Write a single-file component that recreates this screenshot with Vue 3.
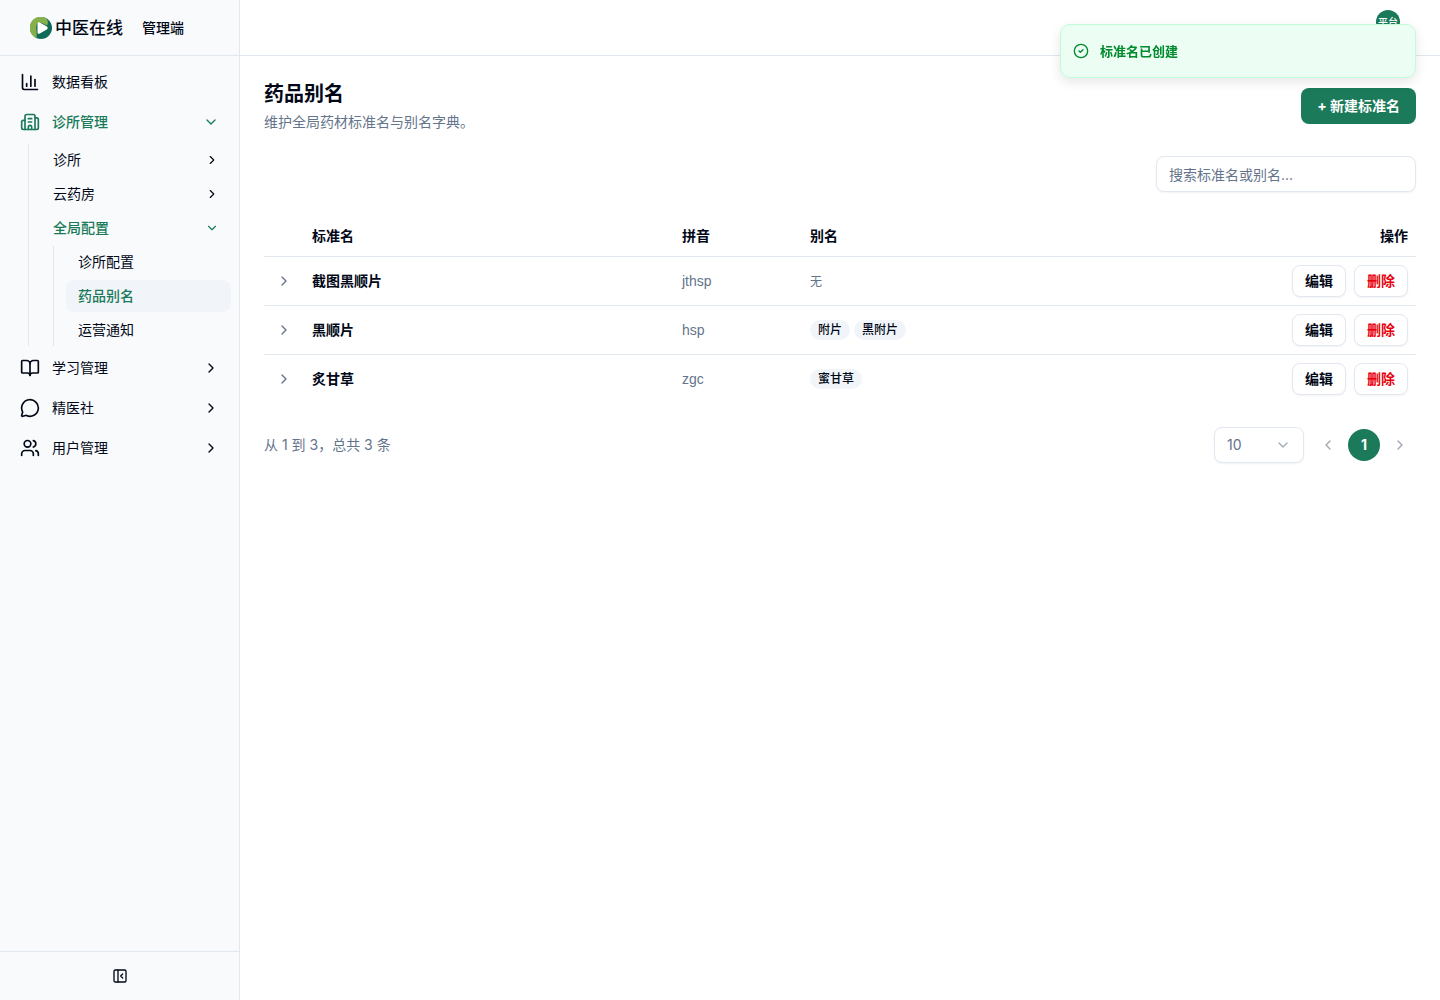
<template>
  <div class="layout">
    <aside class="sidebar">
      <div class="brand">
        <a href="#" class="logo">
          <svg width="22" height="22" viewBox="0 0 22 22" aria-hidden="true">
            <circle cx="11" cy="11" r="11" fill="#0f6b58" />
            <path d="M16 1.200A11 11 0 1 0 6.500 21C7.300 18 6 14 6.300 9.500 6.600 6 9 4.600 12 6L17 8.500C18.500 6 18 3 16 1.200Z" fill="#86b04a" />
            <path d="M7.500 6.800c0-1.500 1-2 2.300-1.300l7 4.100c1.300.8 1.300 2 0 2.800l-7 4.100c-1.300.7-2.300.2-2.300-1.300z" fill="#fff" />
          </svg>
          <span>中医在线</span>
        </a>
        <span class="role">管理端</span>
      </div>

      <nav class="nav">
        <template v-for="item in menu" :key="item.label">
          <button type="button" class="nav-item" :class="{ active: item.open }">
            <svg class="icon icon-lg" viewBox="0 0 24 24" aria-hidden="true">
              <path v-for="d in icons[item.icon]" :key="d" :d="d" />
            </svg>
            <span class="label">{{ item.label }}</span>
            <svg v-if="item.expandable" class="icon" viewBox="0 0 24 24" aria-hidden="true">
              <path :d="item.open ? down : right" />
            </svg>
          </button>
          <ul v-if="item.open" class="sub">
            <li v-for="child in item.children" :key="child.label">
              <button type="button" class="sub-item" :class="{ active: child.open }">
                <span class="label">{{ child.label }}</span>
                <svg class="icon icon-sm" viewBox="0 0 24 24" aria-hidden="true">
                  <path :d="child.open ? down : right" />
                </svg>
              </button>
              <ul v-if="child.open" class="sub nested">
                <li v-for="leaf in child.children" :key="leaf">
                  <a href="#" class="sub-item" :class="{ current: leaf === current }">{{ leaf }}</a>
                </li>
              </ul>
            </li>
          </ul>
        </template>
      </nav>

      <div class="sidebar-footer">
        <button type="button" class="collapse" aria-label="收起侧边栏">
          <svg class="icon" viewBox="0 0 24 24" aria-hidden="true">
            <rect x="3" y="3" width="18" height="18" rx="2" />
            <path d="M9 3v18" />
            <path d="m16 15-3-3 3-3" />
          </svg>
        </button>
      </div>
    </aside>

    <div class="page">
      <header class="topbar">
        <button type="button" class="avatar">平台</button>
      </header>

      <main class="content">
        <div class="heading">
          <div>
            <h1>药品别名</h1>
            <p>维护全局药材标准名与别名字典。</p>
          </div>
          <button type="button" class="btn-primary">+ 新建标准名</button>
        </div>

        <div class="toolbar">
          <input v-model="keyword" type="text" placeholder="搜索标准名或别名..." aria-label="搜索标准名或别名">
        </div>

        <table>
          <colgroup>
            <col class="col-expand">
            <col>
            <col class="col-pinyin">
            <col>
            <col class="col-actions">
          </colgroup>
          <thead>
            <tr>
              <th></th>
              <th>标准名</th>
              <th>拼音</th>
              <th>别名</th>
              <th class="right">操作</th>
            </tr>
          </thead>
          <tbody>
            <tr v-for="row in filtered" :key="row.name">
              <td>
                <button type="button" class="expand" aria-label="展开">
                  <svg class="icon" viewBox="0 0 24 24" aria-hidden="true"><path :d="right" /></svg>
                </button>
              </td>
              <td class="name">{{ row.name }}</td>
              <td class="pinyin">{{ row.pinyin }}</td>
              <td>
                <div v-if="row.aliases.length" class="tags">
                  <span v-for="alias in row.aliases" :key="alias" class="tag">{{ alias }}</span>
                </div>
                <span v-else class="none">无</span>
              </td>
              <td>
                <div class="actions">
                  <button type="button" class="btn">编辑</button>
                  <button type="button" class="btn danger">删除</button>
                </div>
              </td>
            </tr>
          </tbody>
        </table>

        <div class="pagination">
          <span>从 1 到 3，总共 3 条</span>
          <div class="pager">
            <div class="page-size">
              <select v-model="pageSize" aria-label="每页条数">
                <option value="10">10</option>
                <option value="20">20</option>
                <option value="50">50</option>
              </select>
              <svg class="icon" viewBox="0 0 24 24" aria-hidden="true"><path :d="down" /></svg>
            </div>
            <div class="pages">
              <button type="button" disabled aria-label="上一页">
                <svg class="icon" viewBox="0 0 24 24" aria-hidden="true"><path d="m15 18-6-6 6-6" /></svg>
              </button>
              <button type="button" class="selected">1</button>
              <button type="button" disabled aria-label="下一页">
                <svg class="icon" viewBox="0 0 24 24" aria-hidden="true"><path :d="right" /></svg>
              </button>
            </div>
          </div>
        </div>
      </main>
    </div>

    <div class="toast" role="status">
      <svg class="icon" viewBox="0 0 24 24" aria-hidden="true">
        <circle cx="12" cy="12" r="10" />
        <path d="m9 12 2 2 4-4" />
      </svg>
      <span>标准名已创建</span>
    </div>
  </div>
</template>

<script setup>
import { computed, ref } from 'vue';

const keyword = ref('');
const pageSize = ref('10');
const current = '药品别名';

const right = 'm9 18 6-6-6-6';
const down = 'm6 9 6 6 6-6';

const icons = {
  chart: ['M3 3v16a2 2 0 0 0 2 2h16', 'M18 17V9', 'M13 17V5', 'M8 17v-3'],
  hospital: [
    'M10 12h4',
    'M10 8h4',
    'M14 21v-3a2 2 0 0 0-4 0v3',
    'M6 10H4a2 2 0 0 0-2 2v7a2 2 0 0 0 2 2h16a2 2 0 0 0 2-2V9a2 2 0 0 0-2-2h-2',
    'M6 21V5a2 2 0 0 1 2-2h8a2 2 0 0 1 2 2v16',
  ],
  book: [
    'M12 7v14',
    'M3 18a1 1 0 0 1-1-1V4a1 1 0 0 1 1-1h5a4 4 0 0 1 4 4 4 4 0 0 1 4-4h5a1 1 0 0 1 1 1v13a1 1 0 0 1-1 1h-6a3 3 0 0 0-3 3 3 3 0 0 0-3-3z',
  ],
  message: ['M2.992 16.342a2 2 0 0 1 .094 1.167l-1.065 3.290a1 1 0 0 0 1.236 1.168l3.413-.998a2 2 0 0 1 1.099.092 10 10 0 1 0-4.777-4.719'],
  users: [
    'M16 21v-2a4 4 0 0 0-4-4H6a4 4 0 0 0-4 4v2',
    'M16 3.128a4 4 0 0 1 0 7.744',
    'M22 21v-2a4 4 0 0 0-3-3.870',
    'M9 3a4 4 0 1 0 0 8 4 4 0 0 0 0-8',
  ],
};

const menu = [
  { label: '数据看板', icon: 'chart' },
  {
    label: '诊所管理',
    icon: 'hospital',
    expandable: true,
    open: true,
    children: [
      { label: '诊所' },
      { label: '云药房' },
      { label: '全局配置', open: true, children: ['诊所配置', '药品别名', '运营通知'] },
    ],
  },
  { label: '学习管理', icon: 'book', expandable: true },
  { label: '精医社', icon: 'message', expandable: true },
  { label: '用户管理', icon: 'users', expandable: true },
];

const rows = [
  { name: '截图黑顺片', pinyin: 'jthsp', aliases: [] },
  { name: '黑顺片', pinyin: 'hsp', aliases: ['附片', '黑附片'] },
  { name: '炙甘草', pinyin: 'zgc', aliases: ['蜜甘草'] },
];

const filtered = computed(() =>
  rows.filter((row) => [row.name, ...row.aliases].some((text) => text.includes(keyword.value)))
);
</script>

<style>
body {
  margin: 0;
  background: #fff;
}
</style>

<style scoped>
* {
  box-sizing: border-box;
}

.layout {
  display: flex;
  min-height: 100vh;
  color: #020817;
  font-family: Inter, "Noto Sans CJK SC", sans-serif;
  font-size: 14px;
  line-height: 20px;
}

button,
input,
select {
  font: inherit;
  color: inherit;
  margin: 0;
}

button {
  padding: 0;
  border: 0;
  background: none;
  cursor: pointer;
}

a {
  color: inherit;
  text-decoration: none;
}

.icon {
  width: 16px;
  height: 16px;
  flex: none;
  fill: none;
  stroke: currentColor;
  stroke-width: 2;
  stroke-linecap: round;
  stroke-linejoin: round;
}

.icon-lg {
  width: 20px;
  height: 20px;
}

.icon-sm {
  width: 14px;
  height: 14px;
}

/* sidebar */
.sidebar {
  display: flex;
  flex-direction: column;
  flex: none;
  width: 240px;
  border-right: 1px solid #e2e8f0;
  background: #f8fafc;
}

.brand {
  display: flex;
  align-items: center;
  gap: 19px;
  height: 56px;
  padding-left: 30px;
  border-bottom: 1px solid #e2e8f0;
}

.logo {
  display: flex;
  align-items: center;
  gap: 3px;
  font-size: 17px;
  line-height: 24px;
  font-weight: 500;
}

.role {
  font-weight: 500;
}

.nav {
  display: flex;
  flex-direction: column;
  gap: 4px;
  flex: 1;
  padding: 8px;
}

.nav-item {
  display: flex;
  align-items: center;
  gap: 12px;
  height: 36px;
  padding: 0 12px;
  text-align: left;
}

.label {
  flex: 1;
}

.active {
  color: #1b7a59;
  font-weight: 500;
}

.sub {
  display: flex;
  flex-direction: column;
  gap: 2px;
  margin: 0 0 0 20px;
  padding: 0 0 0 12px;
  border-left: 1px solid #e2e8f0;
  list-style: none;
}

.nested {
  margin: 2px 0 0 12px;
}

.sub-item {
  display: flex;
  align-items: center;
  width: 100%;
  height: 32px;
  padding: 0 12px;
  border-radius: 8px;
  text-align: left;
}

.current {
  background: #f1f5f9;
  color: #1b7a59;
  font-weight: 500;
}

.sidebar-footer {
  display: flex;
  align-items: center;
  justify-content: center;
  height: 49px;
  border-top: 1px solid #e2e8f0;
}

.collapse {
  display: grid;
  place-items: center;
  width: 32px;
  height: 32px;
}

/* page */
.page {
  flex: 1;
  min-width: 0;
}

.topbar {
  display: flex;
  justify-content: flex-end;
  align-items: flex-start;
  height: 56px;
  padding: 10px 40px 0;
  border-bottom: 1px solid #e2e8f0;
}

.avatar {
  width: 24px;
  height: 24px;
  border-radius: 50%;
  background: #1b7a59;
  color: #fff;
  font-size: 10px;
  line-height: 24px;
  font-weight: 500;
}

.content {
  display: flex;
  flex-direction: column;
  gap: 24px;
  padding: 24px;
}

.heading {
  display: flex;
  align-items: center;
  justify-content: space-between;
}

h1 {
  margin: 0 0 4px;
  font-size: 20px;
  line-height: 28px;
  font-weight: 700;
}

p {
  margin: 0;
  color: #64748b;
}

.btn-primary {
  height: 36px;
  padding: 0 16px;
  border-radius: 8px;
  background: #1b7a59;
  color: #fff;
  font-weight: 700;
}

.toolbar {
  display: flex;
  justify-content: flex-end;
}

.toolbar input {
  width: 260px;
  height: 36px;
  padding: 0 12px;
  border: 1px solid #e2e8f0;
  border-radius: 8px;
  background: #fff;
  box-shadow: 0 1px 2px rgba(0, 0, 0, 0.05);
}

.toolbar input::placeholder {
  color: #64748b;
  opacity: 1;
}

table {
  width: 100%;
  table-layout: fixed;
  border-collapse: separate;
  border-spacing: 0;
}

.col-expand {
  width: 40px;
}

.col-pinyin {
  width: 128px;
}

.col-actions {
  width: 244px;
}

th,
td {
  padding: 0 8px;
  border-bottom: 1px solid #e2e8f0;
  text-align: left;
}

th {
  height: 41px;
  font-weight: 700;
}

td {
  height: 49px;
}

tbody tr:last-child td {
  height: 48px;
  border-bottom: 0;
}

th.right {
  text-align: right;
}

.expand {
  display: grid;
  place-items: center;
  width: 24px;
  height: 24px;
  color: #64748b;
}

.name {
  font-weight: 700;
}

.pinyin {
  color: #64748b;
  font-family: "Liberation Sans", "Noto Sans CJK SC", sans-serif;
}

.tags {
  display: flex;
  gap: 4px;
}

.tag {
  padding: 0 8px;
  border-radius: 10px;
  background: #f1f5f9;
  font-size: 12px;
  font-weight: 500;
}

.none {
  color: #64748b;
  font-size: 12px;
}

.actions {
  display: flex;
  justify-content: flex-end;
  gap: 8px;
}

.btn {
  height: 32px;
  padding: 0 12px;
  border: 1px solid #e2e8f0;
  border-radius: 8px;
  background: #fff;
  box-shadow: 0 1px 2px rgba(0, 0, 0, 0.05);
  font-weight: 700;
}

.danger {
  color: #e7000b;
}

.pagination {
  display: flex;
  align-items: center;
  justify-content: space-between;
  color: #64748b;
}

.pager {
  display: flex;
  align-items: center;
  gap: 8px;
}

.page-size {
  display: grid;
  align-items: center;
}

.page-size select,
.page-size .icon {
  grid-area: 1 / 1;
}

.page-size select {
  width: 90px;
  height: 36px;
  padding: 0 12px;
  border: 1px solid #e2e8f0;
  border-radius: 8px;
  background: #fff;
  box-shadow: 0 1px 2px rgba(0, 0, 0, 0.05);
  appearance: none;
}

.page-size .icon {
  justify-self: end;
  margin-right: 13px;
  opacity: 0.6;
  pointer-events: none;
}

.pages {
  display: flex;
  gap: 4px;
}

.pages button {
  display: grid;
  place-items: center;
  width: 32px;
  height: 32px;
  border-radius: 50%;
}

.pages button:disabled {
  color: #a1a5ae;
}

.pages .selected {
  background: #1b7a59;
  color: #fff;
  font-weight: 700;
}

.toast {
  position: fixed;
  top: 24px;
  right: 24px;
  display: flex;
  align-items: center;
  gap: 11px;
  width: 356px;
  height: 54px;
  padding: 0 12px;
  border: 1px solid #bffcd9;
  border-radius: 10px;
  background: #ecfdf3;
  box-shadow: 0 4px 12px rgba(0, 0, 0, 0.1);
  color: #008a2e;
  font-size: 13px;
  font-weight: 700;
}
</style>
